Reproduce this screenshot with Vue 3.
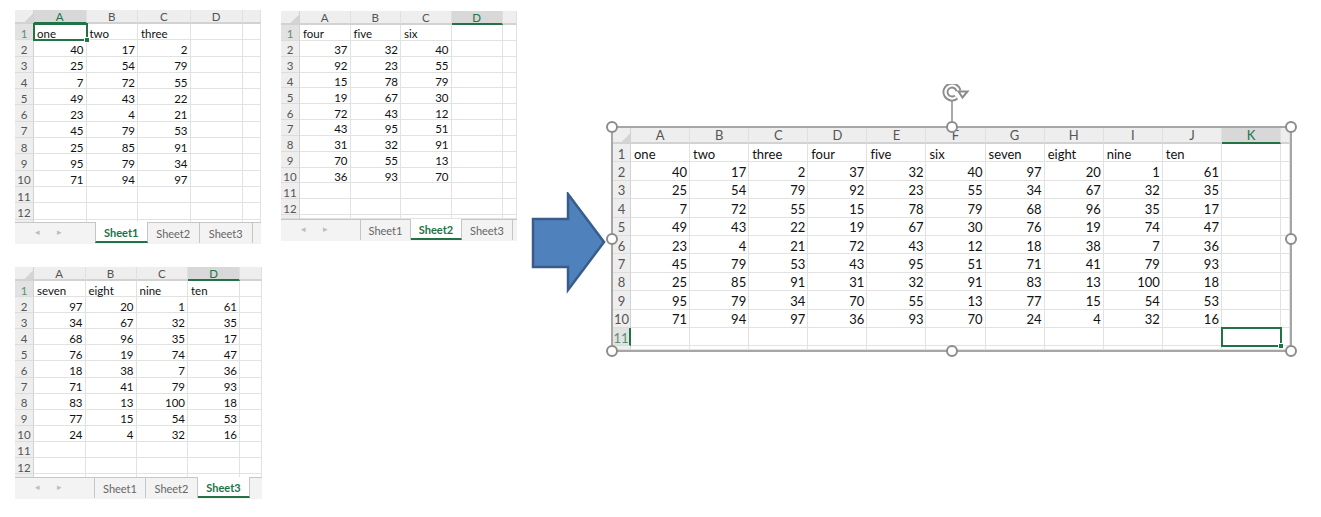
<template>
  <div class="page">
    <div
      v-for="s in sheets"
      :key="s.id"
      class="sheet"
      :class="s.id"
    >
      <div class="grid" :style="gridStyle(s)">
        <div class="corner"></div>
        <div
          v-for="(c, i) in s.cols"
          :key="c"
          class="col-head"
          :class="{ on: i === s.activeCol }"
        >{{ c }}</div>
        <div class="col-head"></div>

        <template v-for="(row, r) in gridRows(s)" :key="r">
          <div class="row-head" :class="{ on: r + 1 === s.activeRow }">{{ row.label }}</div>
          <div
            v-for="(v, c) in row.cells"
            :key="c"
            class="cell"
            :class="{
              num: typeof v === 'number',
              picked: s.picked && s.picked[0] === r && s.picked[1] === c
            }"
          >{{ v }}</div>
          <div class="cell"></div>
        </template>
      </div>

      <div v-if="s.tabs" class="tabs" :style="{ paddingLeft: s.tabLeft + 'px' }">
        <span class="nav nav-l">◂</span>
        <span class="nav nav-r">▸</span>
        <div
          v-for="(t, i) in s.tabs"
          :key="t"
          class="tab"
          :class="{ active: i === s.activeTab }"
          :style="{ width: s.tabWidth + 'px' }"
        >{{ t }}</div>
      </div>

      <template v-if="s.id === 'big'">
        <svg class="rotate" width="36" height="39" viewBox="0 0 36 39">
          <line x1="15" y1="17" x2="15" y2="38" stroke="#8c8c8c" stroke-width="1.5" />
          <path d="M19.2 13A6.5 6.5 0 1 1 21.4 6.9" fill="none" stroke="#8c8c8c" stroke-width="6" />
          <path d="M19.2 13A6.5 6.5 0 1 1 21.4 6.9" fill="none" stroke="#fff" stroke-width="2.2" />
          <polygon points="21.5,7.5 30.5,7.5 25.5,13.5" fill="#fff" stroke="#8c8c8c" stroke-width="2" />
        </svg>
        <span v-for="h in handles" :key="h" class="handle" :class="h"></span>
      </template>
    </div>

    <svg class="arrow" width="78" height="102" viewBox="0 0 78 102">
      <polygon
        points="2,27 37,27 37,2 73,50 37,98 37,75 2,75"
        fill="#4f81bd"
        stroke="#385d8a"
        stroke-width="2.5"
      />
    </svg>
  </div>
</template>

<script setup>
const first = [[40, 17, 2], [25, 54, 79], [7, 72, 55], [49, 43, 22], [23, 4, 21], [45, 79, 53], [25, 85, 91], [95, 79, 34], [71, 94, 97]]
const second = [[37, 32, 40], [92, 23, 55], [15, 78, 79], [19, 67, 30], [72, 43, 12], [43, 95, 51], [31, 32, 91], [70, 55, 13], [36, 93, 70]]
const third = [[97, 20, 1, 61], [34, 67, 32, 35], [68, 96, 35, 17], [76, 19, 74, 47], [18, 38, 7, 36], [71, 41, 79, 93], [83, 13, 100, 18], [77, 15, 54, 53], [24, 4, 32, 16]]

const tabs = ["Sheet1", "Sheet2", "Sheet3"]

const sheets = [
  {
    id: "one",
    cols: ["A", "B", "C", "D"],
    widths: [19, 52.5, 51.5, 52.5, 52, 18],
    headH: 14,
    rowH: 16.3,
    rowCount: 12,
    sliver: 2.4,
    activeCol: 0,
    activeRow: 1,
    picked: [0, 0],
    head: ["one", "two", "three"],
    data: first,
    tabs,
    tabLeft: 80,
    tabWidth: 52.5,
    activeTab: 0
  },
  {
    id: "two",
    cols: ["A", "B", "C", "D"],
    widths: [19, 50.5, 50.5, 50.5, 51, 14.5],
    headH: 14,
    rowH: 15.85,
    rowCount: 12,
    sliver: 3.4,
    activeCol: 3,
    activeRow: 1,
    head: ["four", "five", "six"],
    data: second,
    tabs,
    tabLeft: 79,
    tabWidth: 51,
    activeTab: 1
  },
  {
    id: "three",
    cols: ["A", "B", "C", "D"],
    widths: [19, 51.5, 51, 51.5, 52, 22],
    headH: 14,
    rowH: 16.1,
    rowCount: 12,
    sliver: 2.8,
    activeCol: 3,
    activeRow: 1,
    head: ["seven", "eight", "nine", "ten"],
    data: third,
    tabs,
    tabLeft: 79,
    tabWidth: 52,
    activeTab: 2
  },
  {
    id: "big",
    cols: ["A", "B", "C", "D", "E", "F", "G", "H", "I", "J", "K"],
    widths: [18, ...Array(11).fill(59.1), 9],
    headH: 16,
    rowH: 18.4,
    rowCount: 11,
    sliver: 3.6,
    activeCol: 10,
    activeRow: 11,
    picked: [10, 10],
    head: ["one", "two", "three", "four", "five", "six", "seven", "eight", "nine", "ten"],
    data: first.map((row, i) => [...row, ...second[i], ...third[i]])
  }
]

const handles = ["tl", "tc", "tr", "ml", "mr", "bl", "bc", "br"]

function gridStyle(s) {
  return {
    gridTemplateColumns: s.widths.map((w) => w + "px").join(" "),
    gridTemplateRows: [s.headH, ...Array(s.rowCount).fill(s.rowH), s.sliver].map((h) => h + "px").join(" ")
  }
}

// 行データを列数に揃える
function gridRows(s) {
  const source = [s.head, ...s.data]
  const rows = []
  for (let r = 0; r <= s.rowCount; r++) {
    const values = source[r] || []
    rows.push({
      label: r < s.rowCount ? r + 1 : "",
      cells: s.cols.map((_, c) => (values[c] === undefined ? "" : values[c]))
    })
  }
  return rows
}
</script>

<style scoped>
.page {
  display: grid;
  grid-template-columns: 266px 250px 81px 700px;
  grid-template-rows: 257px 240px;
  width: 1321px;
  height: 517px;
  box-sizing: border-box;
  padding: 10px 0 0 15px;
  background: #fff;
  color: #111;
  font-family: Lato, "Liberation Sans", sans-serif;
  font-size: 11.5px;
  font-variant-ligatures: none;
  overflow: hidden;
}

.sheet {
  position: relative;
  justify-self: start;
  align-self: start;
}

.one {
  grid-column: 1;
  grid-row: 1;
}

.three {
  grid-column: 1;
  grid-row: 2;
}

.two {
  grid-column: 2;
  grid-row: 1 / 3;
  margin-top: 1px;
}

.big {
  grid-column: 4;
  grid-row: 1 / 3;
  margin: 116px 0 0 -1px;
  border: 2px solid #a6a6a6;
  font-size: 13px;
}

.arrow {
  grid-column: 3;
  grid-row: 1 / 3;
  margin-top: 182px;
}

.grid {
  display: grid;
}

.corner,
.col-head,
.row-head,
.cell {
  display: flex;
  align-items: center;
  box-sizing: border-box;
  min-width: 0;
  overflow: hidden;
  white-space: nowrap;
}

.corner {
  background: linear-gradient(135deg, transparent 72%, #d4d4d4 72%), #eee;
  border-bottom: 2px solid #d2d2d2;
  border-right: 1px solid #d2d2d2;
}

.col-head {
  justify-content: center;
  background: #eee;
  border-right: 1px solid #e0e0e0;
  border-bottom: 2px solid #d2d2d2;
  color: #555;
  font-size: 11.5px;
}

.big .col-head {
  font-size: 13px;
}

.col-head.on {
  background: #d8d8d8;
  border-bottom-color: #217346;
  color: #217346;
}

.row-head {
  justify-content: center;
  padding-top: 3px;
  background: #eee;
  border-right: 1px solid #d2d2d2;
  border-bottom: 1px solid #dcdcdc;
  color: #555;
  font-size: 11.5px;
}

.big .row-head {
  padding-top: 2px;
  font-size: 13px;
}

.row-head.on {
  background: #e2e2e2;
  color: #5e8f72;
}

.big .row-head.on {
  border-right: 2px solid #217346;
}

.cell {
  position: relative;
  padding: 3px 2px 0 3px;
  border-right: 1px solid #e2e2e2;
  border-bottom: 1px solid #e2e2e2;
  overflow: visible;
}

.big .cell {
  padding-top: 2px;
}

.cell.num {
  justify-content: flex-end;
}

.cell.picked {
  z-index: 1;
  border: 0;
  box-shadow: inset 0 0 0 1px #217346, 0 0 0 1px #217346;
}

.cell.picked::after {
  content: "";
  position: absolute;
  right: -3px;
  bottom: -3px;
  width: 6px;
  height: 6px;
  background: #217346;
  border: 1px solid #fff;
  box-sizing: border-box;
}

.tabs {
  position: relative;
  display: flex;
  height: 22px;
  box-sizing: border-box;
  background: #f3f3f3;
  border-top: 1px solid #c6c6c6;
  color: #666;
  font-size: 11px;
}

.nav {
  position: absolute;
  top: 4px;
  color: #bdbdbd;
  font-family: "DejaVu Sans", sans-serif;
  font-size: 9px;
}

.nav-l {
  left: 20px;
}

.nav-r {
  left: 42px;
}

.tab {
  display: flex;
  align-items: center;
  justify-content: center;
  height: 20px;
  padding-top: 2px;
  box-sizing: border-box;
  border-right: 1px solid #c6c6c6;
}

.tab:first-of-type {
  border-left: 1px solid #c6c6c6;
}

.tab.active {
  margin-top: -1px;
  height: 21px;
  background: #fff;
  border-bottom: 2px solid #217346;
  color: #217346;
  font-weight: 700;
}

.rotate {
  position: absolute;
  left: calc(50% - 15px);
  bottom: calc(100% + 5px);
}

.handle {
  position: absolute;
  width: 12px;
  height: 12px;
  box-sizing: border-box;
  background: #fff;
  border: 2px solid #8c8c8c;
  border-radius: 50%;
  transform: translate(-50%, -50%);
}

.tl, .tc, .tr { top: -1px; }
.ml, .mr { top: 50%; }
.bl, .bc, .br { top: calc(100% + 1px); }
.tl, .ml, .bl { left: -1px; }
.tc, .bc { left: 50%; }
.tr, .mr, .br { left: calc(100% + 1px); }
</style>
